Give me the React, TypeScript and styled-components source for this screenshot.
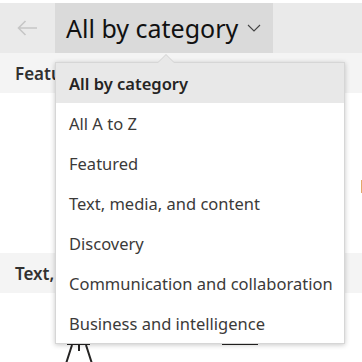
import React from "react";
import styled, { createGlobalStyle } from "styled-components";

const GlobalStyle = createGlobalStyle`
    html, body {
        margin: 0;
        padding: 0;
        background: #ffffff;
    }
    body {
        font-family: "Noto Sans", "Open Sans", sans-serif;
        color: #333333;
    }
`;

const Page = styled.div`
    position: relative;
    width: 362px;
    height: 362px;
    overflow: hidden;
    background: #ffffff;
    padding-top: 3px;
    box-sizing: border-box;
`;

const TopBar = styled.div`
    display: flex;
    align-items: center;
    height: 50px;
    background: #eaeaea;
`;

const BackButton = styled.button`
    display: flex;
    align-items: center;
    justify-content: center;
    width: 55px;
    height: 50px;
    padding: 0;
    border: none;
    background: transparent;
    color: #c6c6c6;
`;

const TitleButton = styled.button`
    display: flex;
    align-items: center;
    gap: 9px;
    width: 218px;
    height: 50px;
    padding: 0 0 0 11px;
    border: none;
    background: #dadada;
    font-family: inherit;
    font-size: 25px;
    color: #111111;
    white-space: nowrap;
`;

const SectionHeader = styled.div`
    display: flex;
    align-items: center;
    height: 40px;
    padding-left: 15px;
    background: #f4f4f4;
    font-size: 17px;
    font-weight: 600;
    color: #323130;
    white-space: nowrap;
`;

const CardArea = styled.div`
    display: flex;
    height: 160px;
    padding-left: 361px;
    box-sizing: border-box;
`;

const CardIcon = styled.div`
    flex: none;
    width: 2px;
    height: 13px;
    margin-top: 87px;
    background: #e3a86a;
`;

const IconRow = styled.div`
    display: flex;
    gap: 125px;
    padding: 50px 0 0 62px;
`;

const Dropdown = styled.ul`
    position: absolute;
    left: 55px;
    top: 62px;
    width: 290px;
    margin: 0;
    padding: 0;
    list-style: none;
    background: #ffffff;
    border: 1px solid #d6d6d6;
    box-shadow: 0 1px 5px rgba(0, 0, 0, 0.22);
    box-sizing: border-box;
`;

const Caret = styled.div`
    position: absolute;
    left: 102px;
    top: -8px;
    width: 0;
    height: 0;
    border-left: 8px solid transparent;
    border-right: 8px solid transparent;
    border-bottom: 8px solid #e8e8e8;
    filter: drop-shadow(0 -1px 0 #d2d2d2);
`;

const Option = styled.li<{ $selected?: boolean }>`
    display: flex;
    align-items: center;
    height: 40px;
    padding-left: 13px;
    background: ${({ $selected }) => ($selected ? "#e8e8e8" : "transparent")};
    font-size: 16.5px;
    font-weight: ${({ $selected }) => ($selected ? 600 : 400)};
    color: ${({ $selected }) => ($selected ? "#252423" : "#3b3a39")};
    white-space: nowrap;
`;

const options = [
    "All by category",
    "All A to Z",
    "Featured",
    "Text, media, and content",
    "Discovery",
    "Communication and collaboration",
    "Business and intelligence",
];

const App = () => {
    return (
        <Page>
            <GlobalStyle />
            <TopBar>
                <BackButton aria-label="Back">
                    <svg width="21" height="16" viewBox="0 0 21 16" fill="none" stroke="currentColor" strokeWidth="1.6">
                        <path d="M20 8H1.5M8.5 1L1.5 8l7 7" />
                    </svg>
                </BackButton>
                <TitleButton>
                    All by category
                    <svg width="14" height="8" viewBox="0 0 14 8" fill="none" stroke="#444" strokeWidth="1.1">
                        <path d="M1 1l6 6 6-6" />
                    </svg>
                </TitleButton>
            </TopBar>
            <SectionHeader>Featured</SectionHeader>
            <CardArea>
                <CardIcon />
            </CardArea>
            <SectionHeader>Text, media, and content</SectionHeader>
            <IconRow>
                <svg width="34" height="40" viewBox="0 0 34 40" fill="none" stroke="#252423" strokeWidth="2">
                    <path d="M5 1h23M10 2L1 30M17 2v6M24 2l9 28" />
                </svg>
                <svg width="38" height="40" viewBox="0 0 38 40" fill="none" stroke="#252423" strokeWidth="2">
                    <path d="M1 1h36" />
                </svg>
            </IconRow>
            <Dropdown>
                <Caret />
                {options.map((label, idx) => (
                    <Option key={label} $selected={idx === 0}>{label}</Option>
                ))}
            </Dropdown>
        </Page>
    );
};

export default App;
